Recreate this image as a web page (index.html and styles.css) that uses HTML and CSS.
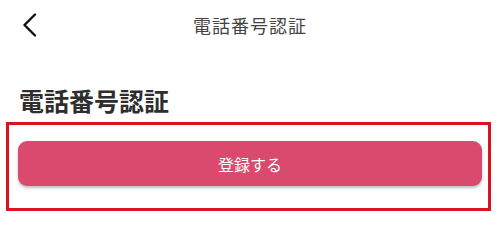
FILE: index.html
```html
<!DOCTYPE html>
<html>
<head>
  <title>電話番号認証</title>
  <link rel="stylesheet" href="styles.css">
</head>

<body>
  <header class="top-bar">
    <button class="top-bar__back" aria-label="戻る">
      <svg width="16" height="24" viewBox="0 0 16 24">
        <path d="M13 1.5 L2.5 12 L13 22.5" fill="none" stroke="#111111" stroke-width="2.4" stroke-linecap="round" stroke-linejoin="round"/>
      </svg>
    </button>
    <div class="top-bar__title">電話番号認証</div>
    <div></div>
  </header>

  <main>
    <h1 class="page-title">電話番号認証</h1>
    <div class="action-box">
      <button class="action-box__button" type="button">登録する</button>
    </div>
  </main>
</body>

</html>
```

FILE: styles.css
```css
* {
  box-sizing: border-box;
}

body {
  margin: 0;
  font-family: "Noto Sans CJK JP", "Noto Sans", sans-serif;
  color: #333333;
  background-color: #ffffff;
}

.top-bar {
  height: 50px;
  display: grid;
  grid-template-columns: 60px 1fr 60px;
  align-items: center;
}

.top-bar__back {
  border: none;
  background: none;
  padding: 0 0 0 22px;
  display: flex;
  align-items: center;
  cursor: pointer;
}

.top-bar__title {
  text-align: center;
  font-size: 18px;
  color: #444444;
  letter-spacing: 1px;
}

main {
  padding: 0 9px 0 6px;
}

.page-title {
  margin: 32px 0 4px;
  padding-left: 13px;
  font-size: 25px;
  line-height: 36px;
  font-weight: bold;
  color: #2e2e2e;
}

.action-box {
  border: 3px solid #d9141e;
  padding: 16px 6px 22px 9px;
}

.action-box__button {
  width: 100%;
  height: 45px;
  border: none;
  border-radius: 9px;
  background-color: #d94a6e;
  color: #ffffff;
  font-family: inherit;
  font-size: 16px;
  box-shadow: 0px 2px 3px rgba(0, 0, 0, 0.25);
  cursor: pointer;
}
```
